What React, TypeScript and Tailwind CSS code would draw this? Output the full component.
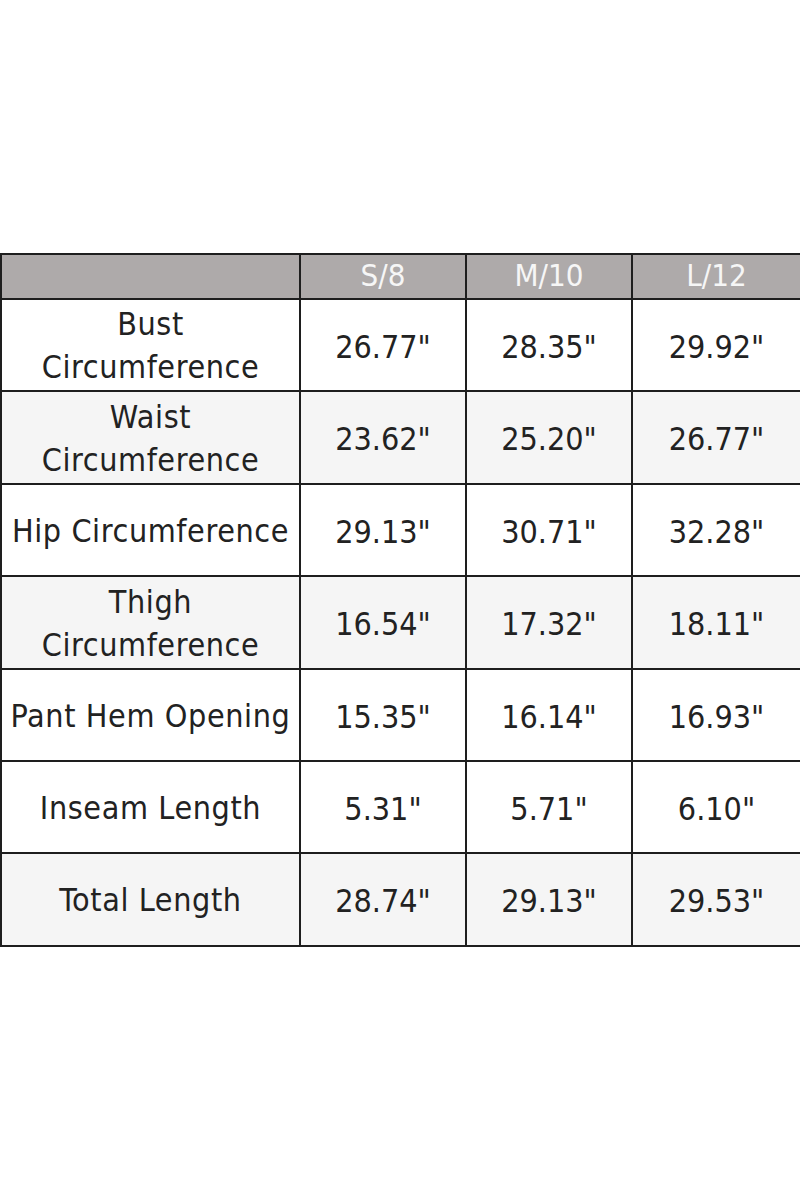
import React from 'react';

const sizes = ['S/8', 'M/10', 'L/12'];

const rows: { label: string[]; values: string[]; shaded: boolean; h: string }[] = [
  { label: ['Bust', 'Circumference'], values: ['26.77"', '28.35"', '29.92"'], shaded: false, h: 'h-[92px]' },
  { label: ['Waist', 'Circumference'], values: ['23.62"', '25.20"', '26.77"'], shaded: true, h: 'h-[93px]' },
  { label: ['Hip Circumference'], values: ['29.13"', '30.71"', '32.28"'], shaded: false, h: 'h-[92px]' },
  { label: ['Thigh', 'Circumference'], values: ['16.54"', '17.32"', '18.11"'], shaded: true, h: 'h-[93px]' },
  { label: ['Pant Hem Opening'], values: ['15.35"', '16.14"', '16.93"'], shaded: false, h: 'h-[92px]' },
  { label: ['Inseam Length'], values: ['5.31"', '5.71"', '6.10"'], shaded: false, h: 'h-[92px]' },
  { label: ['Total Length'], values: ['28.74"', '29.13"', '29.53"'], shaded: true, h: 'h-[93px]' },
];

const App: React.FC = () => {
  return (
    <div className="w-[800px] h-[1200px] bg-white pt-[253px] font-['DejaVu_Sans_Condensed','DejaVu_Sans',sans-serif] [font-stretch:condensed]">
      <table className="w-[800px] border-collapse table-fixed text-[#222222]">
        <colgroup>
          <col className="w-[299px]" />
          <col className="w-[166px]" />
          <col className="w-[166px]" />
          <col className="w-[169px]" />
        </colgroup>
        <thead>
          <tr className="h-[45px] bg-[#aeaaaa]">
            <th className="border-2 border-[#1e1e1e]"></th>
            {sizes.map(s => (
              <th key={s} className="border-2 border-[#1e1e1e] text-[31px] leading-none font-normal text-[#f6f6f6] text-center align-middle pb-[2px]">
                {s}
              </th>
            ))}
          </tr>
        </thead>
        <tbody>
          {rows.map(r => (
            <tr key={r.label.join(' ')} className={`${r.h} ${r.shaded ? 'bg-[#f5f5f5]' : 'bg-white'}`}>
              <td className="border-2 border-[#1e1e1e] text-center align-middle text-[32px] leading-[43px] tracking-[0.6px] px-0 pt-[2px] whitespace-nowrap">
                {r.label.map(l => (
                  <div key={l}>{l}</div>
                ))}
              </td>
              {r.values.map((v, i) => (
                <td key={i} className="border-2 border-[#1e1e1e] text-center align-middle text-[32px] leading-none pt-[3px]">
                  {v}
                </td>
              ))}
            </tr>
          ))}
        </tbody>
      </table>
    </div>
  );
};

export default App;
